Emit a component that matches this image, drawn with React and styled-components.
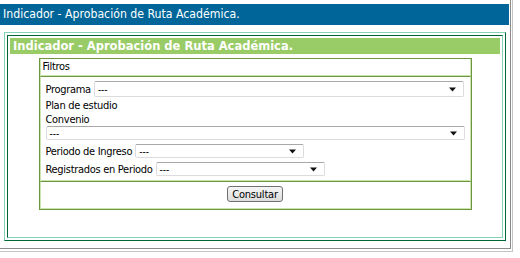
import React from 'react';
import styled, { createGlobalStyle } from 'styled-components';

const GlobalStyle = createGlobalStyle`
  html, body {
    margin: 0;
    padding: 0;
    background: #ffffff;
  }
  body {
    font-family: "DejaVu Sans Condensed", "DejaVu Sans", sans-serif;
    font-size: 11px;
    color: #000;
  }
`;

const Frame = styled.div`
  width: 511px;
  height: 250px;
  border-right: 1px solid #c4c4c4;
  border-bottom: 1px solid #c4c4c4;
  padding-right: 1px;
  padding-bottom: 1px;
`;

const Window = styled.div`
  height: 249px;
  border-right: 1px solid #8a8a8a;
  border-bottom: 1px solid #8a8a8a;
  padding-top: 4px;
  box-sizing: border-box;
`;

const PageHeader = styled.div`
  width: 509px;
  height: 21px;
  background: #006699;
  color: #fff;
  font-size: 12.2px;
  line-height: 21px;
  padding-left: 3px;
  box-sizing: border-box;
  white-space: nowrap;
`;

const OuterTable = styled.div`
  margin: 7px 0 0 4px;
  width: 502px;
  height: 209px;
  box-sizing: border-box;
  border: 1px solid;
  border-color: #86d3b4 #006633 #006633 #86d3b4;
  padding: 2px;
`;

const OuterCell = styled.div`
  height: 100%;
  box-sizing: border-box;
  border: 1px solid;
  border-color: #006633 #86d3b4 #86d3b4 #006633;
  padding: 2px;
`;

const TitleBar = styled.div`
  height: 16px;
  background: #99cc66;
  color: #fff;
  font-family: "DejaVu Sans", sans-serif;
  font-weight: bold;
  font-size: 11.5px;
  line-height: 16px;
  padding-left: 3px;
  white-space: nowrap;
`;

const FilterBox = styled.div`
  width: 433px;
  margin: 4px auto 0;
  box-sizing: border-box;
  border: 1px solid #6e9640;
`;

const BoxRow = styled.div`
  border: 1px solid;
  border-color: #6e9640 #c9e4ad #c9e4ad #c9e4ad;
  border-top-width: ${p => (p.first ? 0 : 1)}px;
  border-top-color: ${p => (p.first ? 'transparent' : '#6e9640')};
  padding: ${p => p.pad || '0 0 0 2px'};
  display: flex;
  flex-direction: column;
  align-items: ${p => (p.center ? 'center' : 'stretch')};
  letter-spacing: -0.3px;
`;

const HeadText = styled.div`
  height: 16px;
  line-height: 16px;
`;

const Line = styled.div`
  display: flex;
  align-items: center;
  gap: 3px;
  height: ${p => p.h || 14}px;
  margin-top: ${p => p.mt || 0}px;
  white-space: nowrap;
`;

const Select = styled.div`
  display: flex;
  align-items: center;
  justify-content: space-between;
  width: ${p => p.w}px;
  height: ${p => p.h || 14}px;
  box-sizing: border-box;
  background: #fff;
  border: 1px solid #dcdce0;
  border-top-color: #a8a8a8;
  border-radius: 2px;
  padding: 0 7px 0 3px;
  font-size: 10px;
  letter-spacing: 0;
`;

const Arrow = () => (
  <svg width="7" height="5" viewBox="0 0 7 5">
    <path d="M0 0.5h7L3.5 4.5z" fill="#111" />
  </svg>
);

const Button = styled.button`
  width: 56px;
  height: 16px;
  padding: 0;
  margin: 4px 0 6px;
  font-family: "DejaVu Sans Condensed", "DejaVu Sans", sans-serif;
  font-size: 11px;
  line-height: 13px;
  letter-spacing: -0.2px;
  color: #000;
  background: linear-gradient(#f6f6f6, #dcdcdc);
  border: 1px solid #707070;
  border-radius: 3px;
`;

const Drop = ({ w, h }) => (
  <Select w={w} h={h}>
    <span>---</span>
    <Arrow />
  </Select>
);

export default function App() {
  return (
    <>
      <GlobalStyle />
      <Frame>
        <Window>
          <PageHeader>Indicador - Aprobación de Ruta Académica.</PageHeader>
          <OuterTable>
            <OuterCell>
              <TitleBar>Indicador - Aprobación de Ruta Académica.</TitleBar>
              <FilterBox>
                <BoxRow first>
                  <HeadText>Filtros</HeadText>
                </BoxRow>
                <BoxRow pad="4px 0 4px 5px">
                  <Line h={16}>
                    Programa
                    <Drop w={370} h={16} />
                  </Line>
                  <Line mt={1}>Plan de estudio</Line>
                  <Line>Convenio</Line>
                  <Line h={14}>
                    <Drop w={419} h={14} />
                  </Line>
                  <Line mt={4}>
                    Periodo de Ingreso
                    <Drop w={169} />
                  </Line>
                  <Line mt={4}>
                    Registrados en Periodo
                    <Drop w={169} />
                  </Line>
                </BoxRow>
                <BoxRow center pad="0">
                  <Button>Consultar</Button>
                </BoxRow>
              </FilterBox>
            </OuterCell>
          </OuterTable>
        </Window>
      </Frame>
    </>
  );
}
